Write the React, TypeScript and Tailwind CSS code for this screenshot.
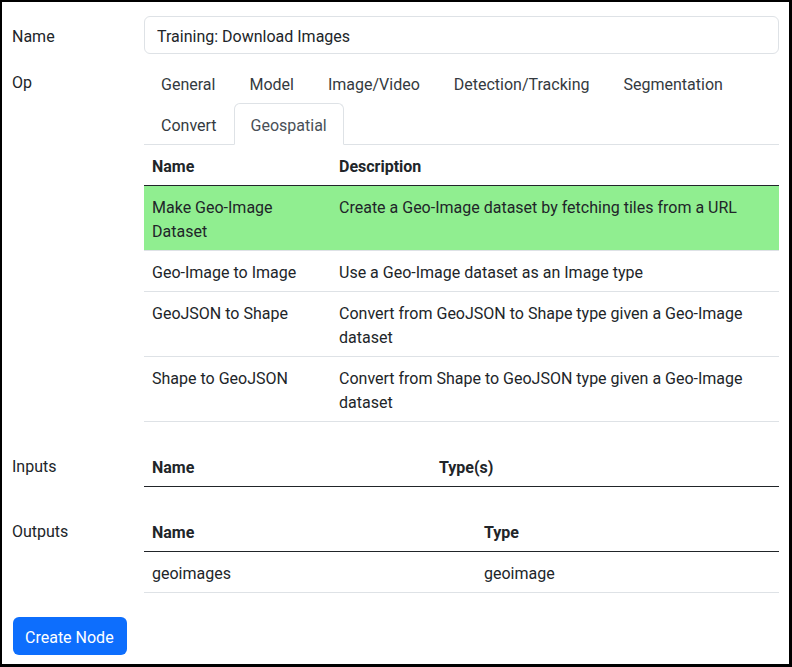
import React from 'react'

const tabs = ['General', 'Model', 'Image/Video', 'Detection/Tracking', 'Segmentation', 'Convert', 'Geospatial']

const ops = [
  { name: 'Make Geo-Image Dataset', desc: 'Create a Geo-Image dataset by fetching tiles from a URL', selected: true },
  { name: 'Geo-Image to Image', desc: 'Use a Geo-Image dataset as an Image type' },
  { name: 'GeoJSON to Shape', desc: 'Convert from GeoJSON to Shape type given a Geo-Image dataset' },
  { name: 'Shape to GeoJSON', desc: 'Convert from Shape to GeoJSON type given a Geo-Image dataset' },
]

function Label({ children }: { children: React.ReactNode }) {
  return <div className="w-[132px] shrink-0 pt-[9px] leading-6">{children}</div>
}

export default function App() {
  return (
    <div className="w-[792px] h-[667px] bg-white border-t-2 border-l-2 border-r-[3px] border-b-[3px] border-black font-['Roboto','Liberation_Sans',sans-serif] text-base text-[#212529]">
      <div className="pl-[10px] pr-[10px] pt-[14px]">
        {/* Name */}
        <div className="flex mb-2">
          <Label>Name</Label>
          <input
            className="flex-1 h-[38px] px-3 pt-[3px] border border-[#dee2e6] rounded-md leading-6 outline-none text-[#212529]"
            defaultValue="Training: Download Images"
          />
        </div>

        {/* Op */}
        <div className="flex mb-2">
          <Label>Op</Label>
          <div className="flex-1 min-w-0">
            <div className="flex flex-wrap border-b border-[#dee2e6]">
              {tabs.map((t) => {
                const active = t === 'Geospatial'
                return (
                  <div
                    key={t}
                    className={
                      active
                        ? 'px-4 pt-[10px] pb-[6px] leading-6 -mb-px border border-[#dee2e6] border-b-white rounded-t-md bg-white text-[#495057]'
                        : 'px-4 pt-[10px] pb-[6px] leading-6 -mb-px border border-transparent rounded-t-md text-[#343a40]'
                    }
                  >
                    {t}
                  </div>
                )
              })}
            </div>
            <table className="w-full border-collapse mb-4 leading-6">
              <thead>
                <tr className="border-b border-[#212529]">
                  <th className="w-[187px] px-2 pt-[10px] pb-[6px] text-left font-bold">Name</th>
                  <th className="px-2 pt-[10px] pb-[6px] text-left font-bold">Description</th>
                </tr>
              </thead>
              <tbody>
                {ops.map((o) => (
                  <tr key={o.name} className={`border-b border-[#dee2e6] ${o.selected ? 'bg-[#90ee90]' : ''}`}>
                    <td className="px-2 pt-[10px] pb-[6px] align-top">{o.name}</td>
                    <td className="px-2 pt-[10px] pb-[6px] align-top">{o.desc}</td>
                  </tr>
                ))}
              </tbody>
            </table>
          </div>
        </div>

        {/* Inputs */}
        <div className="flex mb-2">
          <Label>Inputs</Label>
          <table className="flex-1 border-collapse mb-4 leading-6">
            <thead>
              <tr className="border-b border-[#212529]">
                <th className="w-[287px] px-2 pt-[10px] pb-[6px] text-left font-bold">Name</th>
                <th className="px-2 pt-[10px] pb-[6px] text-left font-bold">Type(s)</th>
              </tr>
            </thead>
          </table>
        </div>

        {/* Outputs */}
        <div className="flex mb-2">
          <Label>Outputs</Label>
          <table className="flex-1 border-collapse mb-4 leading-6">
            <thead>
              <tr className="border-b border-[#212529]">
                <th className="w-[332px] px-2 pt-[10px] pb-[6px] text-left font-bold">Name</th>
                <th className="px-2 pt-[10px] pb-[6px] text-left font-bold">Type</th>
              </tr>
            </thead>
            <tbody>
              <tr className="border-b border-[#dee2e6]">
                <td className="px-2 pt-[10px] pb-[6px]">geoimages</td>
                <td className="px-2 pt-[10px] pb-[6px]">geoimage</td>
              </tr>
            </tbody>
          </table>
        </div>

        <button className="ml-px h-[38px] pl-3 pr-[13px] pt-[3px] rounded-md bg-[#0d6efd] text-white leading-6">Create Node</button>
      </div>
    </div>
  )
}
